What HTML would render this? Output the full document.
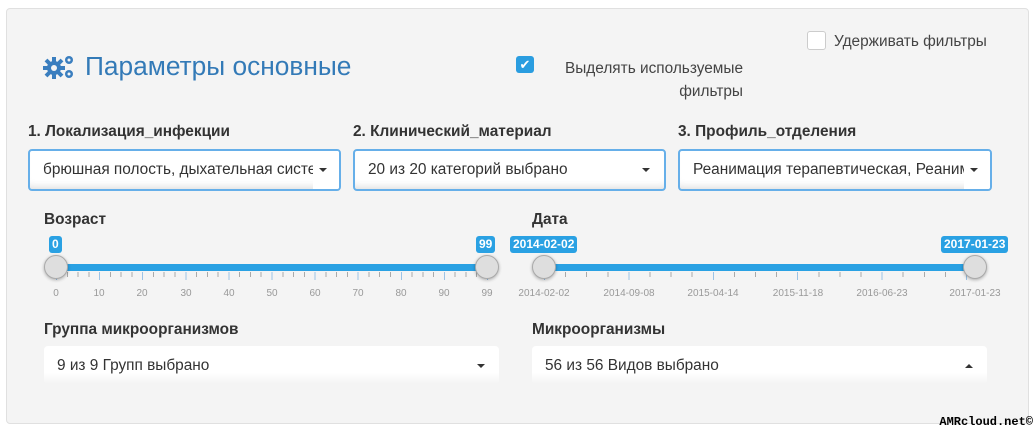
<!DOCTYPE html>
<html><head><meta charset="utf-8"><style>
body{margin:0;width:1035px;height:432px;background:#fff;font-family:"Liberation Sans",sans-serif;position:relative;overflow:hidden}
.a{position:absolute}
.panel{left:6px;top:8px;width:1021px;height:414px;background:#f4f4f4;border:1px solid #e0e0e0;border-radius:4px}
.lbl{font-weight:bold;font-size:15.4px;color:#333}
.dd{background:#fff;border:2px solid #66afe9;border-radius:4px;height:42px;box-sizing:border-box;font-size:15.4px;color:#333;line-height:38px;padding-left:13px;overflow:hidden;white-space:nowrap;box-shadow:inset 0 -8px 8px -6px #ddd}
.dd2{background:linear-gradient(#fff 70%,#f4f4f4);border-radius:4px;height:38px;font-size:15.4px;color:#333;line-height:40px;padding-left:13px}
.car{position:absolute;width:0;height:0;border-left:4px solid transparent;border-right:4px solid transparent;border-top:4px solid #333}
.cover{position:absolute;right:0;top:0;width:26px;height:100%;background:#fff}
.track{position:absolute;height:7px;background:#2aa1e3;top:264px}
.h{position:absolute;width:24px;height:24px;border-radius:50%;background:#dedede;border:1px solid #aaa;box-sizing:border-box;top:255px;box-shadow:0 1px 3px rgba(0,0,0,.3)}
.tag{position:absolute;top:236px;height:17px;background:#2aa1e3;color:#fff;font-size:12px;font-weight:bold;line-height:17px;padding:0 3px;border-radius:3px}
.tk{position:absolute;font-size:10px;color:#999;top:288px;transform:translateX(-50%)}
</style></head><body>
<div class="a panel"></div>
<svg class="a" style="left:43px;top:53px" width="34" height="28" viewBox="0 0 34 28">
<g fill="#3a7ebf"><circle cx="11" cy="15" r="7"/><g stroke="#3a7ebf" stroke-width="4"><line x1="11" y1="4" x2="11" y2="26"/><line x1="0" y1="15" x2="22" y2="15"/><line x1="3" y1="7" x2="19" y2="23"/><line x1="3" y1="23" x2="19" y2="7"/></g><circle cx="26" cy="7" r="4"/><circle cx="26" cy="21" r="4"/></g>
<circle cx="11" cy="15" r="3" fill="#f4f4f4"/><circle cx="26" cy="7" r="1.5" fill="#f4f4f4"/><circle cx="26" cy="21" r="1.5" fill="#f4f4f4"/></svg>
<div class="a" style="left:85px;top:51px;font-size:26.3px;color:#337ab7">Параметры основные</div>
<div class="a" style="left:516px;top:56px;width:18px;height:17px;background:#2a9de0;border-radius:3px;color:#fff;font-size:13px;text-align:center;line-height:17px">✔</div>
<div class="a" style="left:545px;top:57px;width:198px;text-align:right;font-size:15.4px;color:#444;line-height:23px">Выделять используемые<br>фильтры</div>
<div class="a" style="left:807px;top:31px;width:17px;height:17px;background:#fff;border:1px solid #ccc;border-radius:3px"></div>
<div class="a" style="left:834px;top:33px;font-size:15.4px;color:#444">Удерживать фильтры</div>

<div class="a lbl" style="left:28px;top:123px">1. Локализация_инфекции</div>
<div class="a lbl" style="left:353px;top:123px">2. Клинический_материал</div>
<div class="a lbl" style="left:678px;top:123px">3. Профиль_отделения</div>
<div class="a dd" style="left:28px;top:149px;width:313px">брюшная полость, дыхательная система<div class="cover"></div><div class="car" style="right:12px;top:17px"></div></div>
<div class="a dd" style="left:353px;top:149px;width:313px">20 из 20 категорий выбрано<div class="car" style="right:14px;top:17px"></div></div>
<div class="a dd" style="left:678px;top:149px;width:314px">Реанимация терапевтическая, Реанимация<div class="cover"></div><div class="car" style="right:12px;top:17px"></div></div>

<div class="a lbl" style="left:44px;top:211px">Возраст</div>
<div class="a lbl" style="left:532px;top:211px">Дата</div>

<div class="a" style="left:56px;top:272px;width:433px;height:5px;background:repeating-linear-gradient(90deg,#aaa 0 1px,transparent 1px 10.775px)"></div>
<div class="a" style="left:56px;top:272px;width:433px;height:8px;background:repeating-linear-gradient(90deg,#9cc3e6 0 1px,transparent 1px 43.1px)"></div>
<div class="track" style="left:56px;width:431px"></div>
<div class="h" style="left:44px"></div><div class="h" style="left:475px"></div>
<div class="tag" style="left:49px">0</div><div class="tag" style="left:476px">99</div>
<div class="tk" style="left:56px">0</div><div class="tk" style="left:99px">10</div><div class="tk" style="left:142px">20</div><div class="tk" style="left:186px">30</div><div class="tk" style="left:229px">40</div><div class="tk" style="left:272px">50</div><div class="tk" style="left:315px">60</div><div class="tk" style="left:358px">70</div><div class="tk" style="left:401px">80</div><div class="tk" style="left:444px">90</div><div class="tk" style="left:487px">99</div>

<div class="a" style="left:544px;top:272px;width:433px;height:5px;background:repeating-linear-gradient(90deg,#aaa 0 1px,transparent 1px 21.1px)"></div>
<div class="a" style="left:544px;top:272px;width:433px;height:8px;background:repeating-linear-gradient(90deg,#9cc3e6 0 1px,transparent 1px 84.4px)"></div>
<div class="track" style="left:544px;width:431px"></div>
<div class="h" style="left:532px"></div><div class="h" style="left:963px"></div>
<div class="tag" style="left:510px">2014-02-02</div><div class="tag" style="left:941px">2017-01-23</div>
<div class="tk" style="left:544px">2014-02-02</div><div class="tk" style="left:629px">2014-09-08</div><div class="tk" style="left:713px">2015-04-14</div><div class="tk" style="left:798px">2015-11-18</div><div class="tk" style="left:882px">2016-06-23</div><div class="tk" style="left:975px">2017-01-23</div>

<div class="a lbl" style="left:44px;top:321px">Группа микроорганизмов</div>
<div class="a lbl" style="left:532px;top:321px">Микроорганизмы</div>
<div class="a dd2" style="left:44px;top:346px;width:442px">9 из 9 Групп выбрано<div class="car" style="right:14px;top:18px"></div></div>
<div class="a dd2" style="left:532px;top:346px;width:442px">56 из 56 Видов выбрано<div class="car" style="right:14px;top:18px;border-top:0;border-bottom:4px solid #333"></div></div>

<div class="a" style="right:2px;top:415px;font-family:'Liberation Mono',monospace;font-weight:bold;font-size:12px;color:#000">AMRcloud.net©</div>
</body></html>
